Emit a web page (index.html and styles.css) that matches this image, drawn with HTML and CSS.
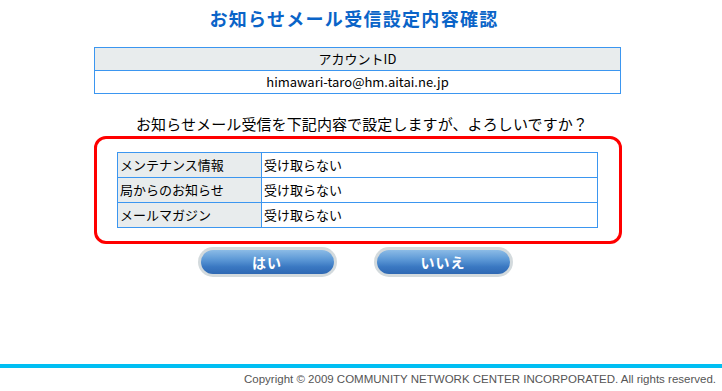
FILE: index.html
```html
<!DOCTYPE html>
<html lang="ja">
<head>
<meta charset="utf-8">
<title>お知らせメール受信設定内容確認</title>
<link rel="stylesheet" href="styles.css">
</head>
<body>
<div class="page">
  <main class="content">
    <h1 class="title">お知らせメール受信設定内容確認</h1>
    <table class="account">
      <tr><th>アカウントID</th></tr>
      <tr><td>himawari-taro@hm.aitai.ne.jp</td></tr>
    </table>
    <p class="question">お知らせメール受信を下記内容で設定しますが、よろしいですか？</p>
    <div class="confirm-box">
      <table class="settings">
        <tr><th>メンテナンス情報</th><td>受け取らない</td></tr>
        <tr><th>局からのお知らせ</th><td>受け取らない</td></tr>
        <tr><th>メールマガジン</th><td>受け取らない</td></tr>
      </table>
    </div>
    <div class="buttons">
      <button class="btn" type="button"><span class="btn-inner">はい</span></button>
      <button class="btn" type="button"><span class="btn-inner">いいえ</span></button>
    </div>
  </main>
  <footer class="footer">
    <div class="footer-line"></div>
    <p class="copyright">Copyright © 2009 COMMUNITY NETWORK CENTER INCORPORATED. All rights reserved.</p>
  </footer>
</div>
</body>
</html>
```
FILE: styles.css
```css
html, body {
  margin: 0;
  padding: 0;
  background: #ffffff;
}
body {
  font-family: "Noto Sans CJK JP", "Noto Sans", sans-serif;
  color: #000;
  font-size: 13px;
}
.page {
  width: 722px;
  height: 391px;
  display: flex;
  flex-direction: column;
}
.content {
  width: 528px;
  margin-left: 94px;
  display: flex;
  flex-direction: column;
  align-items: center;
}
.title {
  margin: 6px 0 0 0;
  height: 24px;
  line-height: 24px;
  font-size: 18px;
  font-weight: bold;
  color: #0a64c8;
  letter-spacing: 1.3px;
  padding-right: 8px;
}
.account {
  margin-top: 17px;
  width: 527px;
  border-collapse: collapse;
  align-self: flex-start;
}
.account th, .account td {
  border: 1px solid #3b96f0;
  height: 22px;
  padding: 0;
  text-align: center;
  font-weight: normal;
  font-size: 13px;
  line-height: 22px;
}
.account th {
  background: #e8eced;
}
.question {
  margin: 20px 0 0 8px;
  height: 20px;
  line-height: 20px;
  font-size: 15px;
  letter-spacing: 0.1px;
}
.confirm-box {
  margin-top: 2px;
  width: 528px;
  box-sizing: border-box;
  border: 3px solid #ff0000;
  border-radius: 12px;
  padding: 13px 22px 13px 20px;
  align-self: flex-start;
}
.settings {
  width: 481px;
  border-collapse: collapse;
}
.settings th, .settings td {
  border: 1px solid #3b96f0;
  height: 24px;
  padding: 0 0 0 2px;
  text-align: left;
  font-weight: normal;
  font-size: 13px;
  line-height: 24px;
}
.settings th {
  background: #e8eced;
  width: 141px;
}
.buttons {
  margin-top: 3px;
  display: flex;
  gap: 37px;
  padding-right: 6px;
}
.btn {
  width: 139px;
  height: 30px;
  padding: 3px;
  border: none;
  border-radius: 15px;
  background: #d3dadd;
  box-sizing: border-box;
  cursor: pointer;
  display: flex;
}
.btn-inner {
  flex: 1;
  border-radius: 12px;
  background: linear-gradient(to bottom, #8bbbe6 0%, #5c98d6 40%, #3a78c2 70%, #2e68b3 100%);
  color: #fff;
  font-family: "Noto Sans CJK JP", sans-serif;
  font-weight: bold;
  font-size: 14px;
  line-height: 24px;
  letter-spacing: 1px;
  text-align: center;
}
.footer {
  margin-top: auto;
  padding-bottom: 5px;
}
.footer-line {
  height: 4px;
  background: #00bff3;
}
.copyright {
  margin: 5px 6px 0 0;
  text-align: right;
  font-family: "Liberation Sans", Arial, sans-serif;
  font-size: 11.5px;
  line-height: 13px;
  color: #555;
}
```
